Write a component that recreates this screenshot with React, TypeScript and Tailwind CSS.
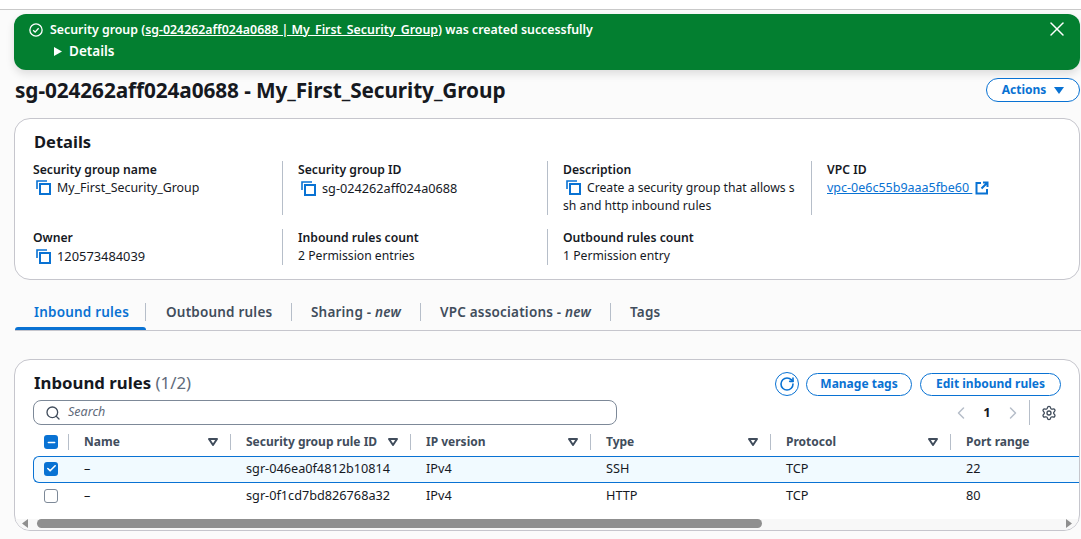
import { Check, ChevronLeft, ChevronRight, Minus, RotateCw, Search, Settings, X } from 'lucide-react'

const font = { fontFamily: '"Noto Sans", sans-serif' }

function CopyIcon() {
  return (
    <svg width="16" height="16" viewBox="0 0 16 16" fill="none" stroke="#0972d3" strokeWidth="2" className="shrink-0">
      <rect x="5" y="5" width="10" height="10" />
      <path d="M2 10V2h10" strokeWidth="1.6" />
    </svg>
  )
}

function Field({ label, value, valueClass = 'text-[12.2px]', copy, divider, h }: { label: string; value: React.ReactNode; valueClass?: string; copy?: boolean; divider?: boolean; h: string }) {
  return (
    <div className={`${h} ${divider ? 'border-l border-[#b6bec9] pl-[15px]' : ''}`}>
      <div className="text-[12.2px] leading-[18px] font-semibold text-[#16191f]">{label}</div>
      <div className={`${valueClass} leading-[18px] text-[#16191f]`}>
        {copy && <span className="mr-1.5 ml-0.5 inline-block align-[-3px]"><CopyIcon /></span>}
        {value}
      </div>
    </div>
  )
}

function Caret() {
  return (
    <svg width="10" height="8" viewBox="0 0 10 8" className="shrink-0">
      <path d="M1 1h8L5 7z" fill="none" stroke="#414d5c" strokeWidth="2" strokeLinejoin="round" />
    </svg>
  )
}

const headers = [
  { label: 'Name', w: 'w-[162px]' },
  { label: 'Security group rule ID', w: 'w-[180px]' },
  { label: 'IP version', w: 'w-[180px]' },
  { label: 'Type', w: 'w-[180px]' },
  { label: 'Protocol', w: 'w-[180px]' },
]

const rows = [
  { id: 'sgr-046ea0f4812b10814', type: 'SSH', port: '22', selected: true },
  { id: 'sgr-0f1cd7bd826768a32', type: 'HTTP', port: '80', selected: false },
]

const tabs = [
  { label: 'Inbound rules', w: 'w-[131px]', pl: 'pl-[19px]', active: true },
  { label: 'Outbound rules', w: 'w-[146px]', pl: 'pl-[20px]' },
  { label: 'Sharing - ', em: 'new', w: 'w-[129px]', pl: 'pl-[19px]' },
  { label: 'VPC associations - ', em: 'new', w: 'w-[190px]', pl: 'pl-[19px]' },
  { label: 'Tags', w: 'w-[70px]', pl: 'pl-[19px]' },
]

export default function App() {
  return (
    <div style={font} className="h-[539px] w-[1081px] overflow-hidden bg-[#fbfbfb] text-[#16191f]">
      <div className="h-[10px] border-b border-[#c9c9c9] bg-white" />

      <div className="ml-[14px] mt-[4px] flex h-[56px] w-[1066px] justify-between rounded-xl bg-[#037f30] pl-[15px] pr-[11px] pt-[7px] text-white shadow-[0_4px_8px_rgba(0,0,0,0.12)]">
        <div>
          <div className="flex h-[18px] items-center gap-[7px] text-[12.35px] font-semibold">
            <svg width="14" height="14" viewBox="0 0 16 16" fill="none" stroke="white" strokeWidth="1.5">
              <circle cx="8" cy="8" r="7" />
              <path d="M4.8 8.2l2.2 2.2 4-4.400" />
            </svg>
            <span>
              Security group (<span className="underline">sg-024262aff024a0688 | My_First_Security_Group</span>) was created successfully
            </span>
          </div>
          <div className="mt-[3px] ml-[25px] flex h-[18px] items-center gap-[7px] text-[13.5px] font-semibold">
            <svg width="8" height="9" viewBox="0 0 8 9"><path d="M0 0l8 4.500L0 9z" fill="white" /></svg>
            Details
          </div>
        </div>
        <X size={24} strokeWidth={1.5} className="-mt-[4px]" />
      </div>

      <div className="mt-[8px] ml-[15px] flex h-[24px] items-center justify-between">
        <h1 className="text-[20.8px] font-bold leading-[24px] tracking-[-0.1px]">sg-024262aff024a0688 - My_First_Security_Group</h1>
        <button className="mr-px flex h-[24px] w-[94px] items-center justify-center gap-2 rounded-full border border-[#0972d3] bg-white text-[12px] font-bold text-[#0972d3]">
          Actions
          <svg width="10" height="7" viewBox="0 0 10 7"><path d="M0 0h10L5 7z" fill="#0972d3" /></svg>
        </button>
      </div>

      <section className="ml-[14px] mt-[16px] h-[162px] w-[1066px] rounded-2xl border border-[#c6c6cd] bg-white px-[19px] pt-[12px]">
        <h2 className="text-[16.5px] font-bold leading-[22px]">Details</h2>
        <div className="mt-[8px] -ml-px grid grid-cols-[249px_265px_264px_1fr]">
          <Field h="h-[54px]" label="Security group name" valueClass="text-[12.4px]" copy value="My_First_Security_Group" />
          <Field h="h-[54px]" divider label="Security group ID" valueClass="text-[12.7px]" copy value="sg-024262aff024a0688" />
          <div className="h-[54px] border-l border-[#b6bec9] pl-[15px] whitespace-nowrap">
            <div className="text-[12.2px] leading-[18px] font-semibold">Description</div>
            <div className="text-[12.2px] leading-[18px]">
              <span className="mr-1.5 ml-0.5 inline-block align-[-3px]"><CopyIcon /></span>
              Create a security group that allows s<br />sh and http inbound rules
            </div>
          </div>
          <Field
            h="h-[54px]"
            divider
            label="VPC ID"
            valueClass="text-[12.5px]"
            value={
              <span className="inline-flex items-center gap-[3px]">
                <span className="text-[#0972d3] underline">vpc-0e6c55b9aaa5fbe60&nbsp;</span>
                <svg width="14" height="14" viewBox="0 0 14 14" fill="none" stroke="#0972d3" strokeWidth="2">
                  <path d="M6 2H1.500v10.500H12V8M8 1.500h4.500V6M12 2L6.500 7.500" />
                </svg>
              </span>
            }
          />
          <Field h="mt-[14px] h-[36px]" label="Owner" valueClass="text-[12.85px]" copy value="120573484039" />
          <Field h="mt-[14px] h-[36px]" divider label="Inbound rules count" value="2 Permission entries" />
          <Field h="mt-[14px] h-[36px]" divider label="Outbound rules count" value="1 Permission entry" />
        </div>
      </section>

      <nav className="ml-[15px] mt-[20px] flex h-[31px] items-start border-b border-[#c6c6cd] text-[13.5px] font-semibold tracking-[0.2px] text-[#414d5c]">
        {tabs.map(({ label, em, w, pl, active }, i) => (
          <div key={label} className={`${w} ${pl} relative flex h-[30px] items-start pt-[3px] ${active ? 'text-[#0972d3]' : ''}`}>
            <span className={`flex h-[18px] w-full items-center ${i < tabs.length - 1 ? 'border-r border-[#b6bec9]' : ''}`}>
              <span>{label}{em && <em className="font-semibold">{em}</em>}</span>
            </span>
            {active && <span className="absolute inset-x-0 bottom-0 h-[3px] rounded-t bg-[#0972d3]" />}
          </div>
        ))}
      </nav>

      <section className="relative ml-[14px] mt-[28px] h-[172px] w-[1066px] overflow-hidden rounded-2xl border border-[#c6c6cd] bg-white">
        <div className="flex items-start justify-between pl-[19px] pr-[18px] pt-[12px]">
          <h2 className="text-[16.8px] font-bold leading-[22px]">
            Inbound rules <span className="font-normal text-[#5f6b7a]">(1/2)</span>
          </h2>
          <div className="flex items-center gap-[7px] text-[12px] font-bold text-[#0972d3]">
            <span className="flex size-[24px] items-center justify-center rounded-full border border-[#0972d3]">
              <RotateCw size={16} strokeWidth={2.4} />
            </span>
            <button className="h-[23px] w-[106px] rounded-full border border-[#0972d3]">Manage tags</button>
            <button className="ml-px h-[23px] w-[141px] rounded-full border border-[#0972d3]">Edit inbound rules</button>
          </div>
        </div>

        <div className="mt-[4px] flex items-center justify-between pl-[18px] pr-[19px]">
          <div className="flex h-[25px] w-[584px] items-center gap-[7px] rounded-lg border border-[#7d8998] pl-[11px] text-[12.5px] italic text-[#5f6b7a]">
            <Search size={16} strokeWidth={2} className="text-[#414d5c]" />
            Search
          </div>
          <div className="flex h-[25px] items-center">
            <ChevronLeft size={20} strokeWidth={1.8} className="text-[#b6bec9]" />
            <span className="w-[32px] text-center text-[13px] font-bold">1</span>
            <ChevronRight size={20} strokeWidth={1.8} className="text-[#b6bec9]" />
            <span className="ml-[6px] h-[25px] border-l border-[#b6bec9]" />
            <Settings size={16} strokeWidth={2} className="ml-[11px] mr-[3px] text-[#414d5c]" />
          </div>
        </div>

        <div className="mt-[5px] mb-[2px] flex h-[24px] items-center pl-[29px] text-[12px] font-bold text-[#414d5c]">
          <span className="flex size-[14px] items-center justify-center rounded-[3px] bg-[#0972d3]">
            <Minus size={11} strokeWidth={3} className="text-white" />
          </span>
          <span className="ml-[10px] h-[16px] border-l border-[#b6bec9]" />
          {headers.map(({ label, w }) => (
            <div key={label} className={`${w} flex h-[16px] items-center justify-between border-r border-[#b6bec9] pl-[15px] pr-[12px]`}>
              <span>{label}</span>
              <Caret />
            </div>
          ))}
          <div className="pl-[15px]">Port range</div>
        </div>

        {rows.map(({ id, type, port, selected }) => (
          <div
            key={id}
            className={`flex h-[27px] items-center pb-[2px] text-[12.7px] ${
              selected ? 'ml-[18px] rounded-l-md border-y border-l border-[#0972d3] bg-[#f1faff] pl-[10px]' : 'pl-[29px]'
            }`}
          >
            {selected ? (
              <span className="flex size-[14px] items-center justify-center rounded-[3px] bg-[#0972d3]">
                <Check size={11} strokeWidth={3.5} className="text-white" />
              </span>
            ) : (
              <span className="size-[14px] rounded-[3px] border border-[#7d8998] bg-white" />
            )}
            <span className="w-[188px] pl-[26px]">–</span>
            <span className="w-[180px]">{id}</span>
            <span className="w-[180px]">IPv4</span>
            <span className="w-[180px]">{type}</span>
            <span className="w-[180px]">TCP</span>
            <span>{port}</span>
          </div>
        ))}

        <div className="absolute inset-x-0 bottom-0 flex h-[11px] items-start gap-[9px] bg-[#f8f8f8] px-[7px]">
          <svg width="6" height="9" viewBox="0 0 6 9" className="shrink-0"><path d="M6 0v9L0 4.500z" fill="#8f8f8f" /></svg>
          <div className="h-[9px] w-[725px] rounded-full bg-[#8f8f8f]" />
          <div className="flex-1" />
          <svg width="6" height="9" viewBox="0 0 6 9" className="shrink-0"><path d="M0 0v9l6-4.500z" fill="#8f8f8f" /></svg>
        </div>
      </section>
    </div>
  )
}
